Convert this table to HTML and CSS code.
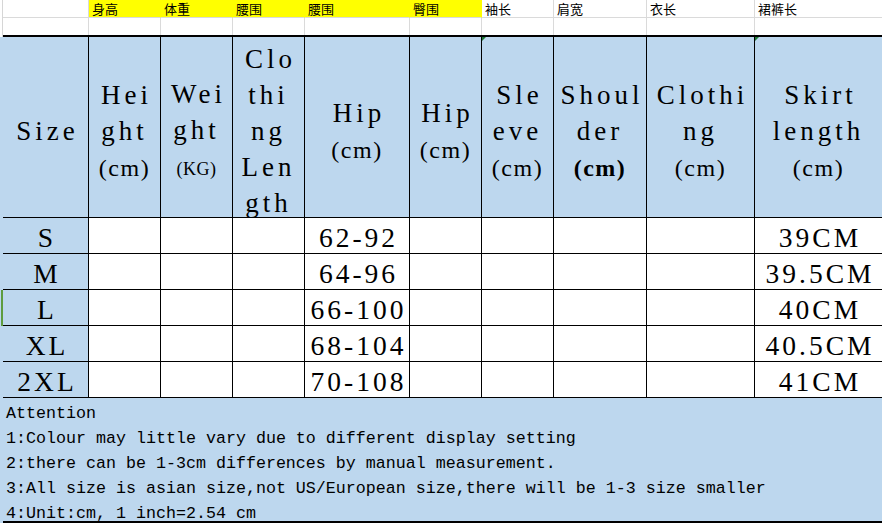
FILE: index.html
```html
<!DOCTYPE html>
<html lang="zh">
<head>
<meta charset="utf-8">
<title>Size chart</title>
<link rel="stylesheet" href="styles.css">
</head>
<body>
<div class="sheet">
  <!-- row 1: chinese labels -->
  <div class="strip strip-top"></div>
  <div class="lc"></div>
  <div class="lc yel">身高</div>
  <div class="lc yel">体重</div>
  <div class="lc yel">腰围</div>
  <div class="lc yel">腰围</div>
  <div class="lc yel">臀围</div>
  <div class="lc">袖长</div>
  <div class="lc">肩宽</div>
  <div class="lc">衣长</div>
  <div class="lc last">裙裤长</div>

  <!-- row 2: empty -->
  <div class="strip strip-top"></div>
  <div class="ec"></div><div class="ec"></div><div class="ec"></div><div class="ec"></div><div class="ec"></div>
  <div class="ec"></div><div class="ec"></div><div class="ec"></div><div class="ec"></div><div class="ec last"></div>

  <!-- thick rule -->
  <div class="strip strip-top"></div>
  <div class="rule"></div>

  <!-- header -->
  <div class="strip strip-blue"></div>
  <div class="hc"><div class="ht">Size</div></div>
  <div class="hc"><div class="ht">Hei<br>ght<br><span class="u">(cm)</span></div></div>
  <div class="hc"><div class="ht">Wei<br>ght<br><span class="kg">(KG)</span></div></div>
  <div class="hc"><div class="ht">Clo<br>thi<br>ng<br>Len<br>gth</div></div>
  <div class="hc"><div class="ht">Hip<br><span class="u">(cm)</span></div></div>
  <div class="hc"><div class="ht">Hip<br><span class="u">(cm)</span></div></div>
  <div class="hc flag"><div class="ht">Sle<br>eve<br><span class="u">(cm)</span></div></div>
  <div class="hc"><div class="ht">Shoul<br>der<br><span class="u b">(cm)</span></div></div>
  <div class="hc"><div class="ht">Clothi<br>ng<br><span class="u">(cm)</span></div></div>
  <div class="hc last flag"><div class="ht">Skirt<br>length<br><span class="u">(cm)</span></div></div>

  <!-- data rows -->
  <div class="strip strip-blue"></div>
  <div class="dc sz">S</div><div class="dc"></div><div class="dc"></div><div class="dc"></div>
  <div class="dc">62-92</div><div class="dc"></div><div class="dc"></div><div class="dc"></div><div class="dc"></div>
  <div class="dc last">39CM</div>

  <div class="strip strip-blue"></div>
  <div class="dc sz">M</div><div class="dc"></div><div class="dc"></div><div class="dc"></div>
  <div class="dc">64-96</div><div class="dc"></div><div class="dc"></div><div class="dc"></div><div class="dc"></div>
  <div class="dc last">39.5CM</div>

  <div class="strip strip-blue strip-sel"></div>
  <div class="dc sz">L</div><div class="dc"></div><div class="dc"></div><div class="dc"></div>
  <div class="dc">66-100</div><div class="dc"></div><div class="dc"></div><div class="dc"></div><div class="dc"></div>
  <div class="dc last">40CM</div>

  <div class="strip strip-blue"></div>
  <div class="dc sz">XL</div><div class="dc"></div><div class="dc"></div><div class="dc"></div>
  <div class="dc">68-104</div><div class="dc"></div><div class="dc"></div><div class="dc"></div><div class="dc"></div>
  <div class="dc last">40.5CM</div>

  <div class="strip strip-blue"></div>
  <div class="dc sz">2XL</div><div class="dc"></div><div class="dc"></div><div class="dc"></div>
  <div class="dc">70-108</div><div class="dc"></div><div class="dc"></div><div class="dc"></div><div class="dc"></div>
  <div class="dc last">41CM</div>

  <!-- attention -->
  <div class="strip strip-blue"></div>
  <div class="note">Attention
1:Colour may little vary due to different display setting
2:there can be 1-3cm differences by manual measurement.
3:All size is asian size,not US/European size,there will be 1-3 size smaller
4:Unit:cm, 1 inch=2.54 cm</div>

  <div class="strip strip-blue"></div>
  <div class="rule"></div>
</div>
</body>
</html>
```

FILE: styles.css
```css
* { box-sizing: border-box; }

html, body {
  margin: 0;
  padding: 0;
  background: #ffffff;
}

.sheet {
  display: grid;
  grid-template-columns: 3px 86px 72px 72px 72px 105px 72px 72px 93px 108px 127px;
  grid-template-rows: 18px 17px 2px 181px 36px 36px 36px 36px 36px 123px 2px;
  width: 882px;
  height: 523px;
  overflow: hidden;
  font-family: "Liberation Serif", "Noto Sans CJK SC", serif;
  color: #000;
}

/* left strip */
.strip { border-right: 1px solid #d6d6d6; }
.strip-top { background: #ffffff; }
.strip-blue { background: #bdd7ee; border-right-color: #bdd7ee; }
.strip-sel { border-right: 2px solid #5e9c3f; background: #bdd7ee; }

/* row 1 labels */
.lc {
  border-right: 1px solid #dadada;
  border-bottom: 1px solid #dadada;
  font-family: "Noto Sans CJK SC", "Noto Sans", sans-serif;
  font-size: 13px;
  line-height: 17px;
  padding-left: 3px;
  white-space: nowrap;
}
.yel { background: #ffff00; border-right-color: #ffff00; }

/* row 2 empty */
.ec { border-right: 1px solid #dadada; }

.last { border-right: 0; }

.rule {
  grid-column: 2 / -1;
  background: #000;
}

/* header */
.hc {
  background: #bdd7ee;
  border-right: 1px solid #000;
  border-bottom: 1px solid #000;
  display: flex;
  align-items: center;
  justify-content: center;
  padding-top: 8px;
  position: relative;
}
.hc.last { border-right: 0; }
.ht {
  text-align: center;
  font-size: 27px;
  line-height: 36px;
  letter-spacing: 4px;
  text-indent: 4px;
  white-space: nowrap;
}
.u { font-size: 24px; letter-spacing: 1.5px; }
.kg { font-size: 18px; letter-spacing: 0.5px; }
.b { font-weight: bold; }

.flag::before {
  content: "";
  position: absolute;
  left: 0;
  top: 0;
  border-top: 4px solid #1e7a36;
  border-right: 4px solid transparent;
}

/* data rows */
.dc {
  background: #ffffff;
  border-right: 1px solid #000;
  border-bottom: 1px solid #000;
  text-align: center;
  font-size: 27.5px;
  line-height: 36px;
  letter-spacing: 3px;
  text-indent: 3px;
  padding-top: 2px;
  white-space: nowrap;
}
.dc.sz { background: #bdd7ee; }
.dc.last { border-right: 0; }

/* attention */
.note {
  grid-column: 2 / -1;
  background: #bdd7ee;
  padding: 3px 0 0 3px;
  font-family: "Liberation Mono", monospace;
  font-size: 16.667px;
  line-height: 25px;
  white-space: pre;
}
```
